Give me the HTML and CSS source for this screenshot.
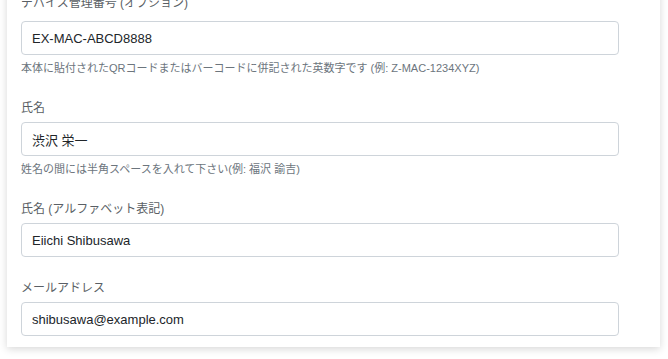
FILE: index.html
```html
<!DOCTYPE html>
<html lang="ja">
<head>
<meta charset="utf-8">
<link rel="stylesheet" href="styles.css">
</head>
<body>
<div class="page">
  <div class="card">
    <form class="form">
      <div class="group first">
        <label class="label">デバイス管理番号 (オプション)</label>
        <input class="control" type="text" value="EX-MAC-ABCD8888">
        <p class="help">本体に貼付されたQRコードまたはバーコードに併記された英数字です (例: Z-MAC-1234XYZ)</p>
      </div>
      <div class="group">
        <label class="label">氏名</label>
        <input class="control" type="text" value="渋沢 栄一">
        <p class="help">姓名の間には半角スペースを入れて下さい(例: 福沢 諭吉)</p>
      </div>
      <div class="group">
        <label class="label">氏名 (アルファベット表記)</label>
        <input class="control" type="text" value="Eiichi Shibusawa">
      </div>
      <div class="group last">
        <label class="label">メールアドレス</label>
        <input class="control" type="text" value="shibusawa@example.com">
      </div>
    </form>
  </div>
</div>
</body>
</html>
```

FILE: styles.css
```css
html, body {
  margin: 0;
  padding: 0;
  background: #ffffff;
  overflow: hidden;
}
body {
  font-family: "Liberation Sans", "Noto Sans CJK JP", sans-serif;
  color: #212529;
}
.page {
  padding: 0 8px 12px 7px;
}
.card {
  margin-top: -18px;
  background: #ffffff;
  padding: 12px 14px 11px 14px;
  box-shadow: 0 2px 8px rgba(0, 0, 0, 0.16);
}
.form {
  max-width: 598px;
}
.group {
  display: flex;
  flex-direction: column;
  margin-bottom: 22px;
}
.group.last {
  margin-bottom: 0;
}
.label {
  font-size: 12px;
  line-height: 18px;
  color: #5a5f65;
  margin-bottom: 5px;
}
.group.first .label {
  margin-bottom: 9px;
}
.control {
  box-sizing: border-box;
  height: 34px;
  width: 100%;
  margin: 0;
  padding: 6px 10px;
  font-family: "Liberation Sans", "Noto Sans CJK JP", sans-serif;
  font-size: 13px;
  line-height: 20px;
  color: #212529;
  background: #ffffff;
  border: 1px solid #ced4da;
  border-radius: 4px;
  outline: none;
}
.help {
  margin: 5px 0 0 0;
  font-size: 11px;
  line-height: 17px;
  color: #6c757d;
}
```
